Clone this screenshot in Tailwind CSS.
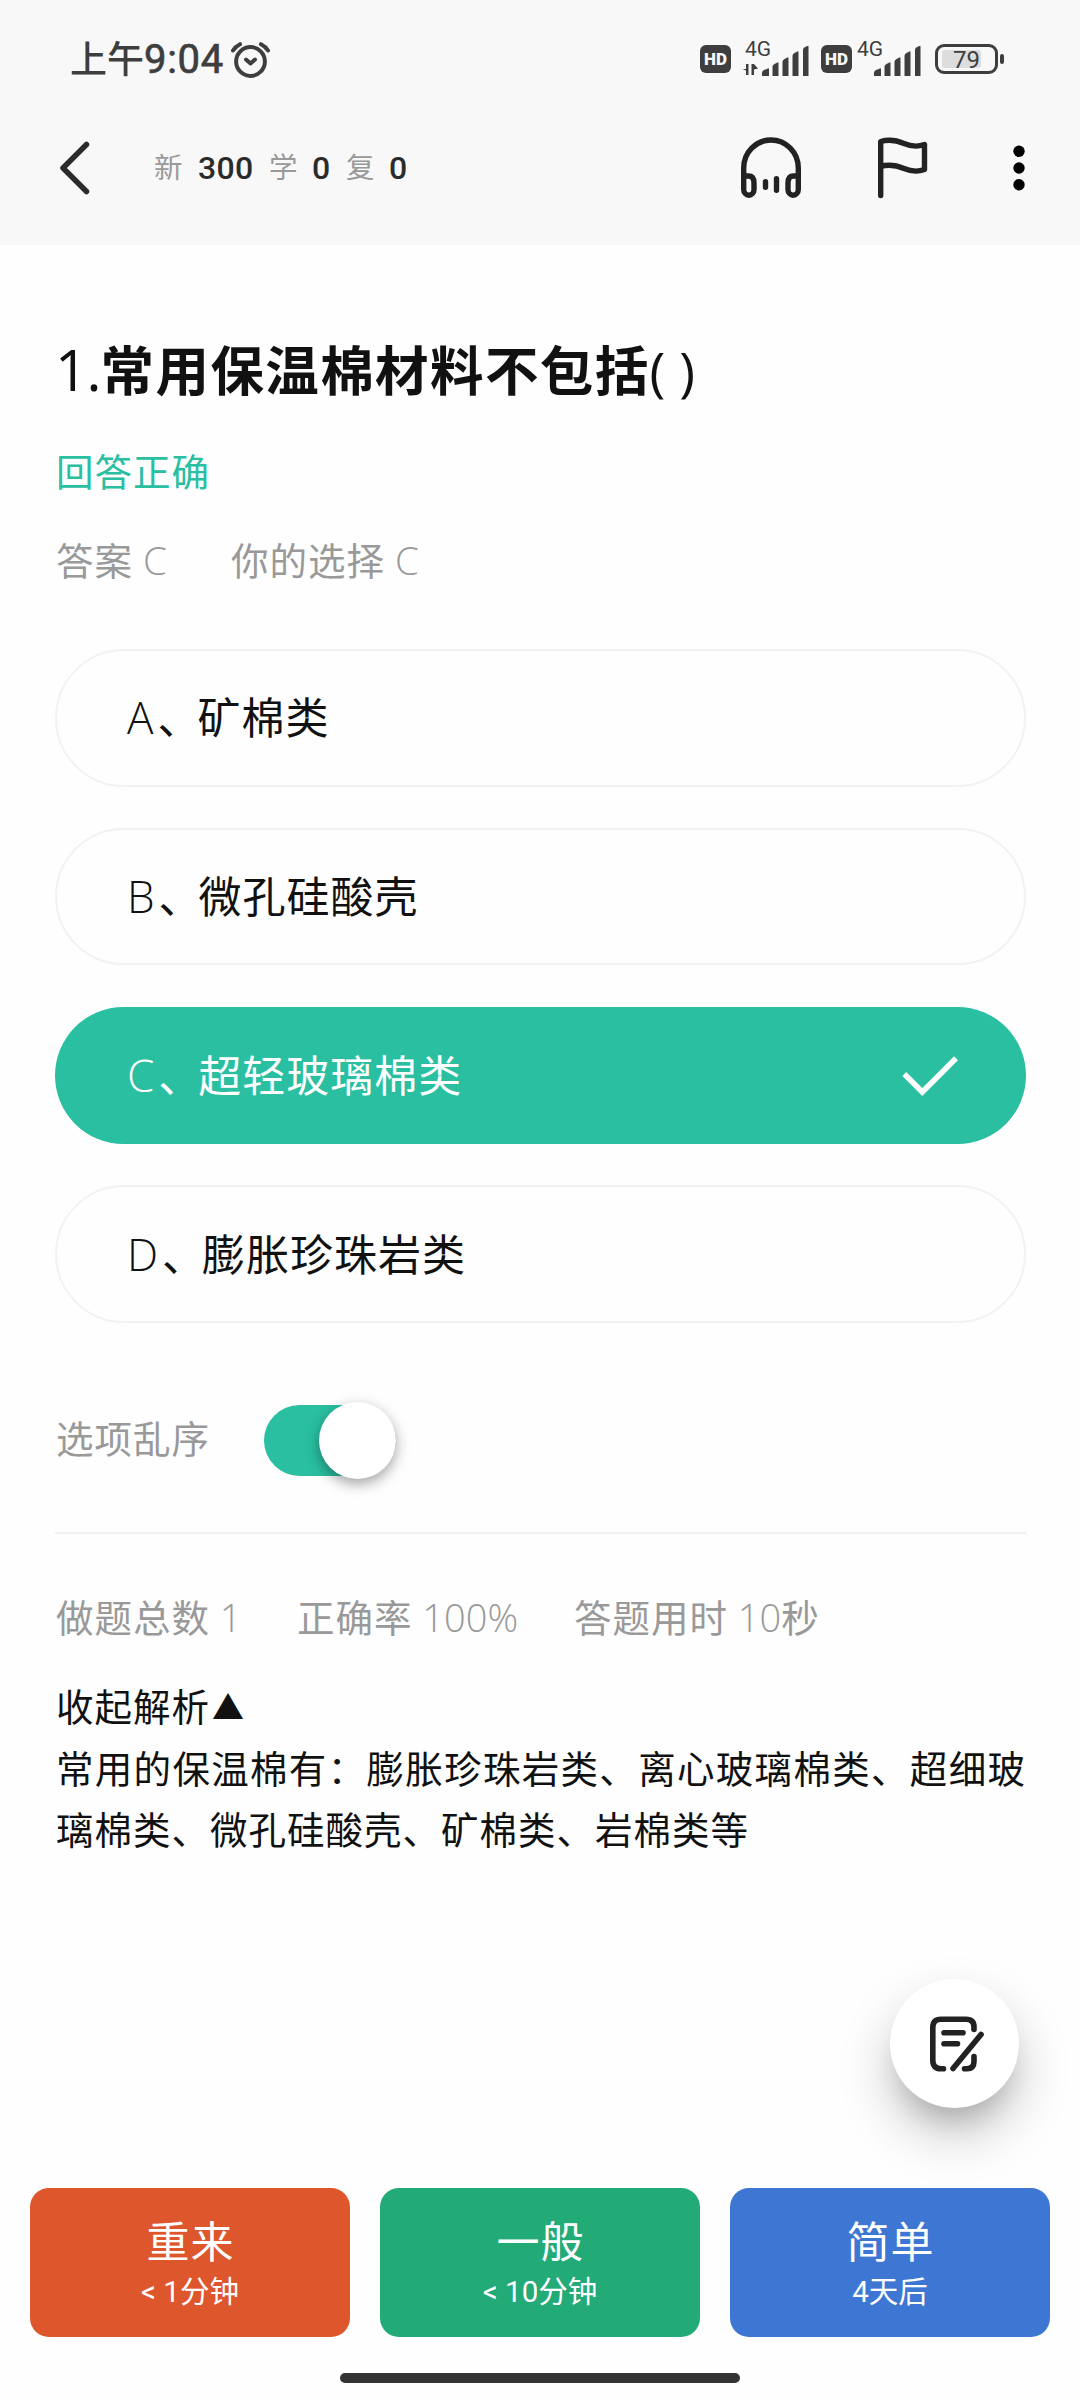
<!DOCTYPE html>
<html lang="zh-CN">
  <head>
    <meta charset="utf-8" />
    <title>答题</title>
    <script src="https://cdn.jsdelivr.net/npm/@tailwindcss/browser@4"></script>
  </head>

  <body class="bg-white">
    <div class="relative flex flex-col w-[1080px] h-[2400px] overflow-hidden bg-[#fefefe] text-[#111] font-['Noto_Sans_CJK_SC',sans-serif]">
      <header class="h-[245px] bg-[#f8f8f8]">
        <!-- status bar -->
        <div class="flex items-center h-[118px] pl-[70px] pr-[75px] text-[#3e3e3e]">
          <div class="flex items-center text-[37px] leading-none font-medium">
            <span class="pb-[3px]">上午</span><span class="pt-[2px] font-[Roboto] font-normal text-[40px] tracking-[0.700px] [-webkit-text-stroke:0.7px_#3e3e3e]">9:04</span>
          </div>
          <svg class="ml-[6px] mt-[1px] w-[40px] h-[38px]" viewBox="0 0 40 38" fill="none" stroke="#3e3e3e" stroke-width="4" stroke-linecap="round" stroke-linejoin="round">
            <circle cx="20.5" cy="20.5" r="14.4" />
            <path d="M3 9.500Q5.500 5.500 10 3.200M31 3.200Q35.500 5.500 38 9.500" />
            <path d="M16 18.500L20.500 22.500L25 18.500" />
          </svg>
          <div class="flex items-center ml-auto">
            <div class="w-[31px] h-[28px] rounded-[6px] bg-[#3e3e3e] text-[#f8f8f8] text-[17px] leading-[28px] font-black font-[Roboto] text-center">HD</div>
            <svg class="ml-[11px] w-[70px] h-[54px]" viewBox="0 -8 70 54" fill="#3e3e3e">
              <text x="3" y="15.500" font-family="Roboto" font-size="21">4G</text>
              <path d="M6.500 24v11h-2.500v-4.500l-3.500-1.500h3.500v-5zM9.500 24h2.500l4 4.500l-4 1v5.500h-2.500z" />
              <path d="M20 36v-3q0-2 2-3l4-1.500q1-.5 1 .5v7zM30.500 36v-9q0-2 2-3l3-1.500q1-.5 1 .5v13zM40.500 36v-14q0-2 2-3l3-1.500q1-.5 1 .5v18zM50.500 36v-20q0-2 2-3l3-1.500q1-.5 1 .5v24zM61 36v-26q0-2 2-3l2.500-1q1-.5 1 .5v29.500z" />
            </svg>
            <div class="ml-[9px] w-[31px] h-[28px] rounded-[6px] bg-[#3e3e3e] text-[#f8f8f8] text-[17px] leading-[28px] font-black font-[Roboto] text-center">HD</div>
            <svg class="ml-[5px] w-[68px] h-[54px]" viewBox="0 -8 68 54" fill="#3e3e3e">
              <text x="0" y="15.500" font-family="Roboto" font-size="21">4G</text>
              <path transform="translate(-3 0)" d="M20 36v-3q0-2 2-3l4-1.500q1-.5 1 .5v7zM30.500 36v-9q0-2 2-3l3-1.500q1-.5 1 .5v13zM40.500 36v-14q0-2 2-3l3-1.500q1-.5 1 .5v18zM50.500 36v-20q0-2 2-3l3-1.500q1-.5 1 .5v24zM61 36v-26q0-2 2-3l2.500-1q1-.5 1 .5v29.500z" />
            </svg>
            <svg class="ml-[10px] w-[70px] h-[30px]" viewBox="0 0 70 30">
              <rect x="1.500" y="1.500" width="60" height="27" rx="7.500" fill="none" stroke="#3e3e3e" stroke-width="3" />
              <rect x="7" y="6" width="39" height="18" rx="3" fill="#ddd" />
              <rect x="65" y="10" width="4" height="10" rx="2" fill="#3e3e3e" />
              <text x="18" y="23.500" font-family="Roboto" font-size="24" fill="#3e3e3e">79</text>
            </svg>
          </div>
        </div>

        <!-- nav bar -->
        <div class="flex items-center h-[100px] pl-[60px] pr-[55px]">
          <svg class="w-[30px] h-[54px]" viewBox="0 0 30 54" fill="none" stroke="#2b2b2b" stroke-width="5.500" stroke-linecap="round" stroke-linejoin="round">
            <path d="M26.500 3.500L3 27L26.500 50.500" />
          </svg>
          <div class="flex items-center ml-[64px] text-[28.500px] leading-none text-[#999]">
            <span class="w-[44px] pb-[3px]">新</span><span class="w-[71px] font-[Roboto] font-medium text-[32px] tracking-[0.300px] text-[#2b2b2b]">300</span>
            <span class="w-[43px] pb-[3px]">学</span><span class="w-[34px] font-[Roboto] font-medium text-[32px] text-[#2b2b2b]">0</span>
            <span class="w-[43px] pb-[3px]">复</span><span class="font-[Roboto] font-medium text-[32px] text-[#2b2b2b]">0</span>
          </div>
          <svg class="ml-auto w-[62px] h-[62px]" viewBox="0 0 62 62" fill="none" stroke="#222" stroke-width="5.400" stroke-linecap="round" stroke-linejoin="round">
            <path d="M3.700 40V31a27.300 28 0 0 1 54.600 0V40" />
            <path d="M3.700 39H8.500Q14 39 14 46V52.500A5.150 5.700 0 0 1 3.700 52.500ZM58.300 39H53.500Q48 39 48 46V52.500A5.150 5.700 0 0 0 58.300 52.500Z" />
            <path d="M25.500 44.700v5.600M36.500 41.700v11.600" />
          </svg>
          <svg class="ml-[75px] w-[52px] h-[62px]" viewBox="0 0 52 62" fill="none" stroke="#222" stroke-width="5.400" stroke-linecap="round" stroke-linejoin="round">
            <path d="M3.700 58.500V4.500C12 2 20 3.500 27 6.500S41 10 47.500 7.500V32.500C41 35 33 34 27 31.500S12 27 3.700 29.500" />
          </svg>
          <svg class="ml-[84px] w-[12px] h-[46px]" viewBox="0 0 12 46" fill="#000">
            <circle cx="6" cy="6.300" r="5.700" /><circle cx="6" cy="23" r="5.700" /><circle cx="6" cy="39.700" r="5.700" />
          </svg>
        </div>
      </header>

      <main class="flex-1 flex flex-col pl-[55px] pr-[54px] text-[37.500px] tracking-[1px] leading-[62px]">
        <h1 class="mt-[83px] h-[80px] leading-[80px] text-[53.500px] tracking-[1.400px] font-bold whitespace-nowrap"><span class="font-['Open_Sans'] font-normal text-[57px] tracking-[-1px]">1.</span>常用保温棉材料不包括<span class="font-['Open_Sans'] font-medium tracking-normal">( )</span></h1>
        <p class="mt-[31px] h-[62px] pl-px text-[#29bfa0]">回答正确</p>
        <div class="flex gap-[64px] mt-[27px] h-[62px] pl-px text-[#999]">
          <span>答案<span class="font-['Open_Sans'] font-light text-[38.500px] tracking-normal"> C</span></span>
          <span>你的选择<span class="font-['Open_Sans'] font-light text-[38.500px] tracking-normal"> C</span></span>
        </div>

        <!-- options -->
        <ul class="flex flex-col gap-[41.250px] mt-[59px] text-[43px]">
          <li class="flex items-center h-[137.500px] px-[70px] pb-[5px] rounded-full border-2 border-[#f2f2f2]"><span class="pt-[4px] font-['Open_Sans'] font-light text-[44px]">A</span><span class="ml-[3px] mr-[-4px]">、</span>矿棉类</li>
          <li class="flex items-center h-[137.500px] px-[70px] pb-[5px] rounded-full border-2 border-[#f2f2f2]"><span class="pt-[4px] font-['Open_Sans'] font-light text-[44px]">B</span><span class="ml-[3px] mr-[-4px]">、</span>微孔硅酸壳</li>
          <li class="flex items-center h-[137.500px] pl-[72px] pr-[67px] rounded-full bg-[#29bfa0] text-white">
            <div class="flex items-center pb-[5px]"><span class="pt-[4px] font-['Open_Sans'] font-light text-[44px]">C</span><span class="ml-[3px] mr-[-4px]">、</span>超轻玻璃棉类</div>
            <svg class="ml-auto mt-[2px] w-[58px] h-[42px]" viewBox="0 0 58 42" fill="none" stroke="#fff" stroke-width="5.500">
              <path d="M3.300 19L21.300 37L55 3.300" />
            </svg>
          </li>
          <li class="flex items-center h-[137.500px] px-[70px] pb-[5px] rounded-full border-2 border-[#f2f2f2]"><span class="pt-[4px] font-['Open_Sans'] font-light text-[44px]">D</span><span class="ml-[3px] mr-[-4px]">、</span>膨胀珍珠岩类</li>
        </ul>

        <!-- shuffle switch -->
        <div class="flex items-center mt-[79px] h-[77px] pl-px text-[#999]">
          <span class="pb-[6px]">选项乱序</span>
          <div class="flex items-center justify-end ml-[54px] w-[132px] h-[71px] rounded-full bg-[#29bfa0]">
            <div class="shrink-0 size-[77px] rounded-full bg-white shadow-[0_5px_14px_rgba(0,0,0,0.36)]"></div>
          </div>
        </div>

        <hr class="mt-[53px] border-t-2 border-[#f0f0f0]" />

        <div class="flex mt-[51px] h-[62px] pl-px text-[#999]">
          <span class="w-[241px]">做题总数<span class="font-['Open_Sans'] font-light text-[38px] tracking-normal"> 1</span></span>
          <span class="w-[277px]">正确率<span class="font-['Open_Sans'] font-light text-[38px] tracking-normal"> 100%</span></span>
          <span>答题用时<span class="font-['Open_Sans'] font-light text-[38px] tracking-normal"> 10</span>秒</span>
        </div>

        <div class="flex items-center mt-[28px] h-[61px] pl-px">收起解析<span class="ml-[2px] text-[32px]">▲</span></div>
        <p class="pl-px leading-[61.600px] text-justify">常用的保温棉有：膨胀珍珠岩类、离心玻璃棉类、超细玻璃棉类、微孔硅酸壳、矿棉类、岩棉类等</p>
      </main>

      <!-- note button -->
      <button class="absolute left-[890px] top-[1979px] size-[129px] rounded-full bg-white flex items-center justify-center shadow-[0_22px_28px_-12px_rgba(0,0,0,0.2),0_26px_50px_4px_rgba(0,0,0,0.18)]">
        <svg class="ml-[4px] w-[54px] h-[56px]" viewBox="0 0 54 56" fill="none" stroke="#222" stroke-width="5.600" stroke-linecap="round" stroke-linejoin="round">
          <path d="M13.500 52.700H11Q2.800 52.700 2.800 44.500V11.500Q2.800 3.300 11 3.300H36Q44 3.300 44 11V13.500M44 40.500V45.500Q44 52.700 37 52.700H34.500" />
          <path d="M14 16.700H33M14 27.700H27.500M23 52.500L51 18.500" />
        </svg>
      </button>

      <footer class="h-[212px] px-[30px]">
        <div class="grid grid-cols-3 gap-[30px] text-white text-center">
          <div class="h-[149px] rounded-[19px] bg-[#de562c]">
            <div class="pt-[21px] pl-px text-[43px] tracking-[1px] leading-[60px]">重来</div>
            <div class="text-[29.500px] leading-[40px]"><span class="font-[Roboto]">&lt; 1</span>分钟</div>
          </div>
          <div class="h-[149px] rounded-[19px] bg-[#22aa77]">
            <div class="pt-[21px] pl-px text-[43px] tracking-[1px] leading-[60px]">一般</div>
            <div class="text-[29.500px] leading-[40px]"><span class="font-[Roboto]">&lt; 10</span>分钟</div>
          </div>
          <div class="h-[149px] rounded-[19px] bg-[#3d76d3]">
            <div class="pt-[21px] pl-px text-[43px] tracking-[1px] leading-[60px]">简单</div>
            <div class="text-[29.500px] leading-[40px]"><span class="font-[Roboto]">4</span>天后</div>
          </div>
        </div>
        <div class="mx-auto mt-[36px] w-[400px] h-[10px] rounded-full bg-[#333]"></div>
      </footer>
    </div>
  </body>
</html>
